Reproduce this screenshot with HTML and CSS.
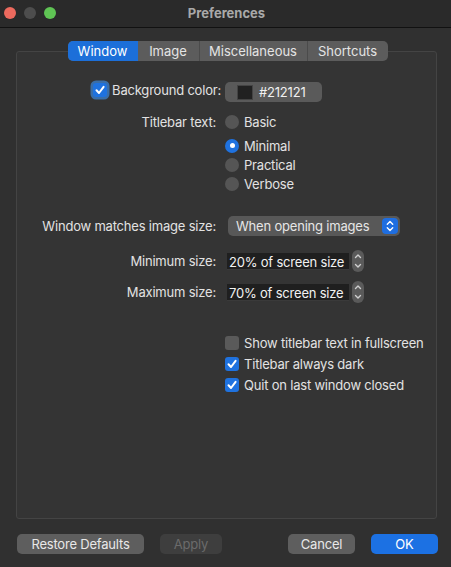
FILE: index.html
```html
<!DOCTYPE html>
<html>
<head>
<meta charset="utf-8">
<link rel="stylesheet" href="styles.css">
</head>
<body>
<div class="window">
  <div class="titlebar">
    <div class="lights">
      <span class="light red"></span>
      <span class="light grey"></span>
      <span class="light green"></span>
    </div>
    <div class="title">Preferences</div>
  </div>
  <div class="content">
    <div class="tabs">
      <div class="tab active t-window">Window</div>
      <div class="tab t-image">Image</div>
      <div class="tab t-misc">Miscellaneous</div>
      <div class="tab t-short">Shortcuts</div>
    </div>
    <div class="box">
      <div class="row r-bg">
        <div class="label">
          <span class="check on focus"><svg viewBox="0 0 14 14"><path d="M3.5 7.3 L6 10 L10.6 3.8" /></svg></span>
          <span>Background color:</span>
        </div>
        <div class="control">
          <div class="colorwell"><span class="swatch"></span><span>#212121</span></div>
        </div>
      </div>

      <div class="row r-basic radio-row">
        <div class="label">Titlebar text:</div>
        <div class="control"><span class="radio"></span><span>Basic</span></div>
      </div>
      <div class="row r-minimal radio-row">
        <div class="label"></div>
        <div class="control"><span class="radio on"></span><span>Minimal</span></div>
      </div>
      <div class="row radio-row">
        <div class="label"></div>
        <div class="control"><span class="radio"></span><span>Practical</span></div>
      </div>
      <div class="row radio-row">
        <div class="label"></div>
        <div class="control"><span class="radio"></span><span>Verbose</span></div>
      </div>

      <div class="row r-match">
        <div class="label">Window matches image size:</div>
        <div class="control">
          <div class="popup">
            <span class="popup-text">When opening images</span>
            <span class="popup-arrows"><svg viewBox="0 0 12 16"><path d="M3.3 6.3 L6 3.6 L8.7 6.3 M3.3 9.7 L6 12.4 L8.7 9.7" /></svg></span>
          </div>
        </div>
      </div>

      <div class="row r-min size-row">
        <div class="label">Minimum size:</div>
        <div class="control">
          <div class="field">20% of screen size</div>
          <div class="stepper"><svg viewBox="0 0 12 22"><path d="M3.5 7.5 L6 5 L8.5 7.5 M3.5 14.5 L6 17 L8.5 14.5" /></svg></div>
        </div>
      </div>
      <div class="row r-max size-row">
        <div class="label">Maximum size:</div>
        <div class="control">
          <div class="field">70% of screen size</div>
          <div class="stepper"><svg viewBox="0 0 12 22"><path d="M3.5 7.5 L6 5 L8.5 7.5 M3.5 14.5 L6 17 L8.5 14.5" /></svg></div>
        </div>
      </div>

      <div class="row r-show check-row">
        <div class="label"></div>
        <div class="control"><span class="check"></span><span>Show titlebar text in fullscreen</span></div>
      </div>
      <div class="row r-dark check-row">
        <div class="label"></div>
        <div class="control"><span class="check on"><svg viewBox="0 0 14 14"><path d="M3.5 7.3 L6 10 L10.6 3.8" /></svg></span><span>Titlebar always dark</span></div>
      </div>
      <div class="row r-quit check-row">
        <div class="label"></div>
        <div class="control"><span class="check on"><svg viewBox="0 0 14 14"><path d="M3.5 7.3 L6 10 L10.6 3.8" /></svg></span><span>Quit on last window closed</span></div>
      </div>
    </div>
  </div>
  <div class="footer">
    <div class="btn b-restore">Restore Defaults</div>
    <div class="btn b-apply disabled">Apply</div>
    <div class="spacer"></div>
    <div class="btn b-cancel">Cancel</div>
    <div class="btn b-ok primary">OK</div>
  </div>
</div>
</body>
</html>
```

FILE: styles.css
```css
* { box-sizing: border-box; }
html, body {
  margin: 0;
  padding: 0;
  background: #303030;
}
body {
  font-family: Inter, "Liberation Sans", Arial, sans-serif;
  font-size: 13px;
  letter-spacing: -0.2px;
  color: #dedede;
}
.window {
  width: 451px;
  height: 567px;
  display: flex;
  flex-direction: column;
  background: #303030;
}
.titlebar {
  height: 28px;
  flex: none;
  background: #2a2a2a;
  border-bottom: 1px solid #111;
  display: flex;
  align-items: center;
}
.lights {
  display: flex;
  gap: 8px;
  padding-left: 4px;
  margin-top: -1px;
}
.light {
  width: 12px;
  height: 12px;
  border-radius: 50%;
  display: block;
}
.light.red { background: #ec6a5e; }
.light.grey { background: #4d4d4d; }
.light.green { background: #5fc454; }
.title {
  flex: 1;
  text-align: center;
  font-weight: 700;
  color: #a9a9a9;
  margin-left: -54px;
  margin-top: -2px;
  font-size: 13px;
  letter-spacing: 0;
}
.content {
  flex: 1;
  display: flex;
  flex-direction: column;
  padding: 13px 14px 0 16px;
}
.tabs {
  align-self: center;
  margin-left: 2px;
  display: flex;
  height: 20px;
  background: #5c5c5c;
  border-radius: 5px;
  position: relative;
  z-index: 1;
  color: #e4e4e4;
  letter-spacing: 0;
}
.tab {
  height: 20px;
  line-height: 20px;
  text-align: center;
  border-left: 1px solid #4b4b4b;
}
.tab.active {
  background: #1c6fd9;
  color: #fff;
  border-radius: 5px 0 0 5px;
  border-left: none;
}
.t-window + .tab { border-left: none; }
.t-window { width: 70px; }
.t-image { width: 61px; }
.t-misc { width: 108px; }
.t-short { width: 81px; }
.box {
  flex: 1;
  margin-top: -10px;
  border: 1px solid #444;
  background: #343434;
  border-radius: 3px;
  padding-top: 26px;
  display: flex;
  flex-direction: column;
}
.row {
  display: grid;
  grid-template-columns: 199px 1fr;
  column-gap: 9px;
  height: 20px;
  align-items: center;
}
.label {
  text-align: right;
  justify-self: end;
  display: flex;
  align-items: center;
  gap: 5px;
  color: #e2e2e2;
}
.control {
  display: flex;
  align-items: center;
  gap: 5px;
  color: #e2e2e2;
}
.r-bg .label { margin-right: -5px; }
.r-bg .control { padding-top: 4px; }
.radio-row { height: 19px; }
.r-basic { margin-top: 14px; }
.r-minimal { margin-top: 5px; }
.r-match { margin-top: 23px; }
.size-row { height: 22px; }
.r-min { margin-top: 14px; }
.r-max { margin-top: 9px; }
.check-row { height: 19px; }
.r-show { margin-top: 30px; }
.r-dark, .r-quit { margin-top: 2px; }

.check {
  width: 14px;
  height: 14px;
  border-radius: 3px;
  background: #5a5a5a;
  display: inline-flex;
  align-items: center;
  justify-content: center;
  flex: none;
}
.check.on { background: #1f72df; }
.check svg { width: 14px; height: 14px; }
.check svg path {
  fill: none;
  stroke: #fff;
  stroke-width: 2;
  stroke-linecap: round;
  stroke-linejoin: round;
}
.check.focus {
  box-shadow: 0 0 0 2.5px #3a6ea8;
}
.radio {
  width: 14px;
  height: 14px;
  border-radius: 50%;
  background: #555;
  flex: none;
  position: relative;
}
.radio.on {
  background: #1f72df;
}
.radio.on::after {
  content: "";
  position: absolute;
  left: 4.5px;
  top: 4.5px;
  width: 5px;
  height: 5px;
  border-radius: 50%;
  background: #fff;
}
.colorwell {
  width: 97px;
  height: 20px;
  border-radius: 5px;
  background: #5a5a5a;
  display: flex;
  align-items: center;
  gap: 6px;
  padding-left: 12px;
  color: #f0f0f0;
}
.swatch {
  width: 16px;
  height: 15px;
  background: #212121;
  border: 1px solid #444;
}
.popup {
  width: 172px;
  height: 20px;
  margin-left: 3px;
  border-radius: 5px;
  background: #585858;
  display: flex;
  align-items: center;
  justify-content: space-between;
  padding-left: 8px;
  padding-right: 2px;
  color: #e6e6e6;
}
.popup-arrows {
  width: 16px;
  height: 16px;
  border-radius: 4px;
  background: #1f6ee0;
  display: flex;
  align-items: center;
  justify-content: center;
}
.popup-arrows svg { width: 12px; height: 16px; }
.popup-arrows path, .stepper path {
  fill: none;
  stroke: #fff;
  stroke-width: 1.4;
  stroke-linecap: round;
  stroke-linejoin: round;
}
.field {
  width: 122px;
  height: 17px;
  margin-left: 2px;
  background: #1f1f1f;
  color: #f2f2f2;
  padding-left: 2px;
  line-height: 18px;
  border-bottom: 1px solid #3a3a3a;
}
.stepper {
  width: 12px;
  height: 22px;
  border-radius: 6px;
  background: #5a5a5a;
  margin-left: -2px;
}
.stepper svg { width: 12px; height: 22px; display: block; }
.stepper path { stroke: #cfcfcf; }

.footer {
  flex: none;
  display: flex;
  align-items: center;
  padding: 15px 13px 13px 17px;
  gap: 16px;
}
.spacer { flex: 1; }
.btn {
  height: 20px;
  line-height: 20px;
  border-radius: 5px;
  text-align: center;
  background: #5e5e5e;
  color: #e8e8e8;
}
.b-restore { width: 127px; }
.b-apply { width: 62px; background: #3e3e3e; color: #6b6b6b; }
.b-cancel { width: 67px; }
.b-ok { width: 67px; background: #1c71e3; color: #fff; }
```
